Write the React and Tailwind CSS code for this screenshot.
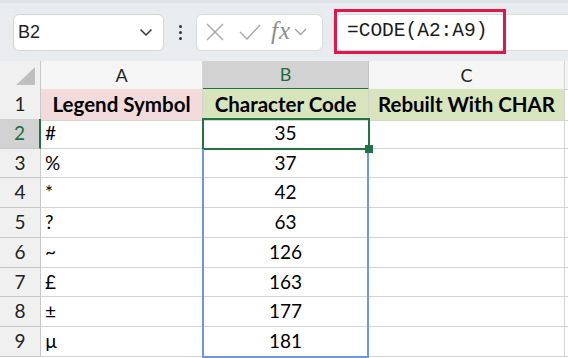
const rows = [
  ["#", 35],
  ["%", 37],
  ["*", 42],
  ["?", 63],
  ["~", 126],
  ["£", 163],
  ["±", 177],
  ["µ", 181],
];

const font = { fontFamily: "Lato, 'Noto Sans', sans-serif" };

const Toolbar = () => (
  <div className="h-[61px] bg-[#e9ecef] border-t-[3px] border-[#dfe3e7] flex items-center pl-[13px] gap-0">
    <div className="w-[151px] h-[37px] bg-white border border-[#d3d6da] rounded-[6px] flex items-center justify-between pl-[4px] pr-[10px]">
      <span className="text-[18px] text-[#222]" style={{ fontFamily: "'Liberation Sans', sans-serif" }}>B2</span>
      <svg width="14" height="9" viewBox="0 0 14 9">
        <path d="M1.5 1.5 L7 7 L12.5 1.5" fill="none" stroke="#333" strokeWidth="1.5" />
      </svg>
    </div>
    <div className="w-[32px] flex flex-col items-center gap-[3px]">
      <span className="w-[3px] h-[3px] rounded-full bg-[#333]" />
      <span className="w-[3px] h-[3px] rounded-full bg-[#333]" />
      <span className="w-[3px] h-[3px] rounded-full bg-[#333]" />
    </div>
    <div className="w-[127px] h-[37px] bg-white border border-[#d9dcdf] rounded-[6px] flex items-center pl-[9px]">
      <svg width="18" height="18" viewBox="0 0 18 18">
        <path d="M1 1 L17 17 M17 1 L1 17" stroke="#a8a8a8" strokeWidth="1.4" />
      </svg>
      <svg width="22" height="18" viewBox="0 0 22 18" className="ml-[15px]">
        <path d="M1 9 L8 16 L21 2" fill="none" stroke="#a8a8a8" strokeWidth="1.4" />
      </svg>
      <span className="ml-[10px] text-[25px] italic text-[#8c8c8c] leading-none tracking-[1px] -mt-[3px]" style={{ fontFamily: "'Liberation Serif', serif" }}>fx</span>
      <svg width="13" height="8" viewBox="0 0 13 8" className="ml-[3px]">
        <path d="M1 1 L6.5 6.5 L12 1" fill="none" stroke="#a0a0a0" strokeWidth="1.3" />
      </svg>
    </div>
    <div className="ml-[10px] flex-1 h-[37px] bg-white border-y border-l border-[#d9dcdf] rounded-l-[6px] relative flex items-center">
      <div className="absolute left-[0px] top-[-6px] w-[172px] h-[45px] border-[3px] border-[#e0174b]" />
      <span className="pl-[13px] text-[19.5px] text-[#1a1a1a]" style={{ fontFamily: "'Liberation Mono', 'DejaVu Sans Mono', monospace" }}>
        =CODE(A2:A9)
      </span>
    </div>
  </div>
);

const cols = "grid grid-cols-[41px_162px_166px_196px_1fr]";

const App = () => (
  <div className="w-[568px] h-[358px] overflow-hidden bg-white" style={font}>
    <Toolbar />
    <div className="relative">
      <div className={`${cols} h-[28px] bg-[#f5f5f5] text-[18px] text-[#222]`}>
        <div className="border-r border-b border-[#c8c8c8] bg-[#f0f0f0] flex items-end justify-end pr-[5px] pb-[4px]">
          <div className="w-0 h-0 border-l-[19px] border-l-transparent border-b-[18px] border-b-[#bfbfbf]" />
        </div>
        <div className="border-r border-b border-[#d4d4d4] flex items-center justify-center">A</div>
        <div className="border-r border-b-2 border-r-[#c4c4c4] border-b-[#217346] bg-[#d2d2d2] text-[#1a6d3f] flex items-center justify-center">B</div>
        <div className="border-r border-b border-[#d4d4d4] flex items-center justify-center">C</div>
        <div className="border-b border-[#d4d4d4]" />
      </div>
      <div className={`${cols} h-[29.75px] text-[20.5px] font-bold text-black`}>
        <div className="bg-[#f0f0f0] border-r border-b border-[#c8c8c8] flex items-center justify-center font-normal text-[19px] text-[#222]">1</div>
        <div className="bg-[#f2dcdb] border-r border-b border-[#d4d4d4] flex items-center justify-center">Legend Symbol</div>
        <div className="bg-[#d8e4bc] border-r border-b border-[#d4d4d4] flex items-center justify-center">Character Code</div>
        <div className="bg-[#d8e4bc] border-r border-b border-[#d4d4d4] flex items-center justify-center">Rebuilt With CHAR</div>
        <div className="border-b border-[#d4d4d4]" />
      </div>
      {rows.map(([sym, code], i) => {
        const sel = i === 0;
        return (
          <div key={i} className={`${cols} h-[29.75px] text-[19px] text-black`}>
            <div
              className={`border-b border-[#c8c8c8] flex items-center justify-center ${
                sel ? "bg-[#d2d2d2] text-[#1a6d3f] border-r-2 border-r-[#217346]" : "bg-[#f0f0f0] text-[#222] border-r"
              }`}
            >
              {i + 2}
            </div>
            <div className="border-r border-b border-[#d4d4d4] flex items-center pl-[4px]">{sym}</div>
            <div className="border-r border-b border-[#d4d4d4] flex items-center justify-center">{code}</div>
            <div className="border-r border-b border-[#d4d4d4]" />
            <div className="border-b border-[#d4d4d4]" />
          </div>
        );
      })}
      <div className="absolute left-[202px] top-[57px] w-[168px] h-[32px] border-2 border-[#217346]" />
      <div className="absolute left-[202px] top-[88px] w-[167px] h-[209px] border-x-2 border-b-2 border-[#6f98db]" />
      <div className="absolute left-[365px] top-[84px] w-[8px] h-[8px] bg-[#217346]" />
    </div>
  </div>
);

export default App;
